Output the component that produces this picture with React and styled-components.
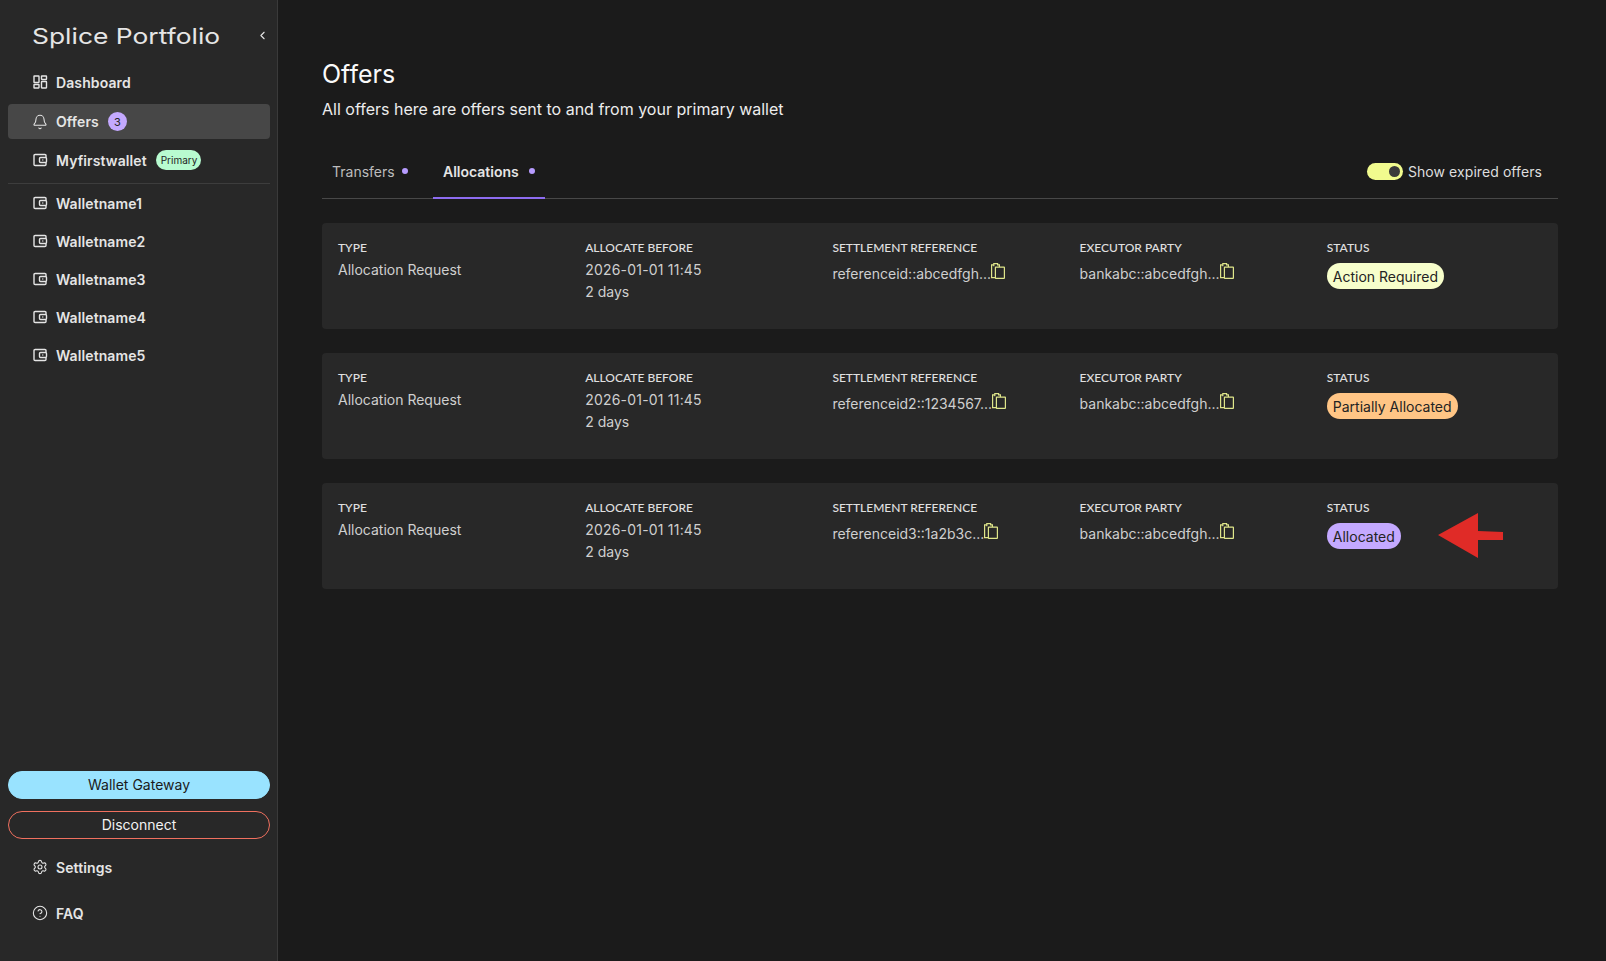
import React from 'react';
import styled, { createGlobalStyle } from 'styled-components';
import { Bell, ChevronLeft, CircleHelp, Settings } from 'lucide-react';

const GlobalStyle = createGlobalStyle`
  html, body {
    margin: 0;
    height: 100%;
    background: #1b1b1b;
    overflow: hidden;
  }
  * { box-sizing: border-box; }
  #root { height: 100%; }
`;

const Layout = styled.div`
  display: flex;
  height: 961px;
  font-family: Inter, 'Liberation Sans', sans-serif;
  color: #e5e5e5;
`;

const Sidebar = styled.aside`
  width: 278px;
  flex-shrink: 0;
  display: flex;
  flex-direction: column;
  padding: 0 7px 24px 8px;
  background: #282828;
  border-right: 1px solid #3a3a3a;
`;

const Brand = styled.div`
  height: 64px;
  padding: 7px 0 0 24px;
  display: flex;
  align-items: center;
  justify-content: space-between;
  color: #e5e5e5;

  & svg { margin-right: 1px; }
`;

const BrandName = styled.span`
  font-family: Inter, sans-serif;
  font-size: 22px;
  font-weight: 400;
  white-space: nowrap;
  display: inline-block;
  transform: scaleX(1.2);
  transform-origin: left center;
`;

const NavRow = styled.div`
  display: flex;
  align-items: center;
  gap: 8px;
  padding-left: 24px;
  height: ${(props) => props.$height || 38}px;
  margin-bottom: ${(props) => props.$after || 0}px;
  border-radius: 4px;
  background: ${(props) => (props.$active ? '#474747' : 'transparent')};
  font-size: 14px;
  font-weight: 600;
  letter-spacing: 0.1px;
  color: #e5e5e5;

  & svg { flex-shrink: 0; }
`;

const CountBadge = styled.span`
  width: 19px;
  height: 19px;
  margin-left: 1px;
  border-radius: 50%;
  background: #c4a9ff;
  color: #232323;
  font-size: 11px;
  font-weight: 400;
  display: flex;
  align-items: center;
  justify-content: center;
`;

const PrimaryBadge = styled.span`
  height: 20px;
  margin-left: 1px;
  padding: 0 4px 0 5px;
  border-radius: 10px;
  background: #b8fbd0;
  color: #232323;
  font-size: 10px;
  font-weight: 400;
  letter-spacing: 0;
  display: flex;
  align-items: center;
`;

const Divider = styled.hr`
  width: 100%;
  height: 1px;
  margin: 0;
  border: 0;
  background: #3d3d3d;
`;

const Footer = styled.div`
  margin-top: auto;
  display: flex;
  flex-direction: column;
`;

const PillButton = styled.button`
  height: 28px;
  margin-bottom: ${(props) => props.$after}px;
  padding: 0 0 1px;
  border-radius: 14px;
  border: 1px solid ${(props) => (props.$outline ? '#f0705f' : '#99e3ff')};
  background: ${(props) => (props.$outline ? 'transparent' : '#99e3ff')};
  color: ${(props) => (props.$outline ? '#f2f2f2' : '#1b1b1b')};
  font-family: inherit;
  font-size: 14px;
`;

const Main = styled.main`
  flex: 1;
  min-width: 0;
  padding: 58px 48px 0 44px;
`;

const Title = styled.h1`
  margin: 0;
  font-size: 25px;
  line-height: 32px;
  font-weight: 400;
  color: #fafafa;
`;

const Subtitle = styled.p`
  margin: 7px 0 0;
  font-size: 16px;
  line-height: 24px;
  color: #ededed;
`;

const TabBar = styled.div`
  display: flex;
  align-items: center;
  height: 55px;
  margin-top: 23px;
  border-bottom: 1px solid #484848;
`;

const Tab = styled.div`
  height: 55px;
  margin-bottom: -1px;
  padding: 1px 10px 0;
  width: ${(props) => (props.$active ? '112px' : '111px')};
  display: flex;
  align-items: center;
  justify-content: ${(props) => (props.$active ? 'space-between' : 'flex-start')};
  gap: 7px;
  font-size: 14px;
  font-weight: ${(props) => (props.$active ? 600 : 400)};
  color: ${(props) => (props.$active ? '#e5e5e5' : '#bdbdbd')};
  border-bottom: 2px solid ${(props) => (props.$active ? '#8d6cf0' : 'transparent')};
`;

const Dot = styled.span`
  width: 6px;
  height: 6px;
  border-radius: 50%;
  background: #b79cff;
`;

const ToggleGroup = styled.label`
  margin-left: auto;
  padding-right: 16px;
  display: flex;
  align-items: center;
  gap: 5px;
  font-size: 14px;
  letter-spacing: 0.08px;
  color: #dedede;
`;

const Toggle = styled.span`
  width: 36px;
  height: 17px;
  border-radius: 9px;
  padding-right: 3px;
  background: #f1fb8e;
  display: flex;
  align-items: center;
  justify-content: flex-end;

  &::after {
    content: '';
    width: 11px;
    height: 11px;
    border-radius: 50%;
    background: #3a3a3a;
  }
`;

const CardList = styled.div`
  display: flex;
  flex-direction: column;
  gap: 24px;
  margin-top: 24px;
`;

const Card = styled.section`
  position: relative;
  height: 106px;
  padding: 17px 16px 0;
  display: grid;
  grid-template-columns: repeat(5, 1fr);
  column-gap: 32px;
  background: #282828;
  border-radius: 4px;
`;

const Label = styled.div`
  margin-bottom: 3px;
  font-family: Lato, sans-serif;
  font-size: 12px;
  line-height: 16px;
  font-weight: 500;
  color: #e0e0e0;
  text-transform: uppercase;
  white-space: nowrap;
`;

const Value = styled.div`
  font-size: 14px;
  line-height: 22px;
  letter-spacing: ${(props) => (props.$spaced ? '0.2px' : 'normal')};
  color: #cfcfcf;
  white-space: nowrap;
`;

const CopyValue = styled(Value)`
  display: flex;
  align-items: flex-start;
  margin-top: 7px;
`;

const statusColors = {
  action: '#f7fecb',
  partial: '#ffc585',
  allocated: '#c4a9ff',
};

const Status = styled.span`
  display: inline-flex;
  align-items: center;
  height: 26px;
  margin-top: 4px;
  padding: 0 6px;
  border-radius: 13px;
  background: ${(props) => statusColors[props.$kind]};
  color: #232323;
  font-size: 14px;
  white-space: nowrap;
`;

const Pointer = styled.svg`
  position: absolute;
  left: 1116px;
  top: 30px;
`;

function DashboardIcon() {
  return (
    <svg width="16" height="16" viewBox="0 0 16 16" fill="none" stroke="currentColor" strokeWidth="1.4">
      <rect x="2" y="2" width="5" height="6.5" rx="0.4" />
      <rect x="9.5" y="2" width="5" height="3.5" rx="0.4" />
      <rect x="2" y="10.5" width="5" height="3.5" rx="0.4" />
      <rect x="9.5" y="7.5" width="5" height="6.5" rx="0.4" />
    </svg>
  );
}

function WalletIcon() {
  return (
    <svg width="16" height="16" viewBox="0 0 16 16" fill="none" stroke="currentColor" strokeWidth="1.4">
      <path d="M14 5.5V3.6c0-.6-.5-1.1-1.1-1.1H3.1C2.5 2.5 2 3 2 3.6v8.8c0 .6.5 1.1 1.1 1.1h9.8c.6 0 1.1-.5 1.1-1.1v-2" />
      <rect x="7.5" y="5.5" width="7" height="5" rx="1" />
      <circle cx="10.8" cy="8" r="0.7" fill="currentColor" stroke="none" />
    </svg>
  );
}

function CopyIcon() {
  return (
    <svg width="14" height="16" viewBox="0 0 14 16" fill="none" stroke="#dfe68a" strokeWidth="1.2">
      <path d="M4 14.6H.6V1.9h2.2" />
      <path d="M2.8 3.2V.6h3.8v1.3h1.8v2.2" />
      <rect x="4.4" y="4.2" width="9" height="11.2" rx="0.4" />
    </svg>
  );
}

const wallets = ['Walletname1', 'Walletname2', 'Walletname3', 'Walletname4', 'Walletname5'];

const offers = [
  { reference: 'referenceid::abcedfgh...', status: 'Action Required', kind: 'action' },
  { reference: 'referenceid2::1234567...', status: 'Partially Allocated', kind: 'partial' },
  { reference: 'referenceid3::1a2b3c...', status: 'Allocated', kind: 'allocated', marked: true },
];

function OfferCard({ offer }) {
  return (
    <Card>
      <div>
        <Label>Type</Label>
        <Value>Allocation Request</Value>
      </div>
      <div>
        <Label>Allocate before</Label>
        <Value $spaced>2026-01-01 11:45</Value>
        <Value>2 days</Value>
      </div>
      <div>
        <Label>Settlement reference</Label>
        <CopyValue>
          {offer.reference}
          <CopyIcon />
        </CopyValue>
      </div>
      <div>
        <Label>Executor party</Label>
        <CopyValue>
          bankabc::abcedfgh...
          <CopyIcon />
        </CopyValue>
      </div>
      <div>
        <Label>Status</Label>
        <Status $kind={offer.kind}>{offer.status}</Status>
      </div>
      {offer.marked && (
        <Pointer width="66" height="46" viewBox="0 0 66 46">
          <polygon points="0,22 40,0 40,18 65,19 65,27 40,27 40,45" fill="#e02b27" />
        </Pointer>
      )}
    </Card>
  );
}

export default function App() {
  return (
    <>
      <GlobalStyle />
      <Layout>
        <Sidebar>
          <Brand>
            <BrandName>Splice Portfolio</BrandName>
            <ChevronLeft size={13} strokeWidth={2} />
          </Brand>
          <NavRow $height={36} $after={4}>
            <DashboardIcon />
            Dashboard
          </NavRow>
          <NavRow $active $height={35}>
            <Bell size={16} strokeWidth={1.6} />
            Offers
            <CountBadge>3</CountBadge>
          </NavRow>
          <NavRow $height={42} $after={2}>
            <WalletIcon />
            Myfirstwallet
            <PrimaryBadge>Primary</PrimaryBadge>
          </NavRow>
          <Divider />
          {wallets.map((name) => (
            <NavRow key={name}>
              <WalletIcon />
              {name}
            </NavRow>
          ))}
          <Footer>
            <PillButton $after={12}>Wallet Gateway</PillButton>
            <PillButton $outline $after={5}>Disconnect</PillButton>
            <NavRow $height={46}>
              <Settings size={16} strokeWidth={1.6} />
              Settings
            </NavRow>
            <NavRow $height={46} $after={1}>
              <CircleHelp size={16} strokeWidth={1.6} />
              FAQ
            </NavRow>
          </Footer>
        </Sidebar>
        <Main>
          <Title>Offers</Title>
          <Subtitle>All offers here are offers sent to and from your primary wallet</Subtitle>
          <TabBar>
            <Tab>
              Transfers
              <Dot />
            </Tab>
            <Tab $active>
              Allocations
              <Dot />
            </Tab>
            <ToggleGroup>
              <Toggle />
              Show expired offers
            </ToggleGroup>
          </TabBar>
          <CardList>
            {offers.map((offer) => (
              <OfferCard key={offer.reference} offer={offer} />
            ))}
          </CardList>
        </Main>
      </Layout>
    </>
  );
}
